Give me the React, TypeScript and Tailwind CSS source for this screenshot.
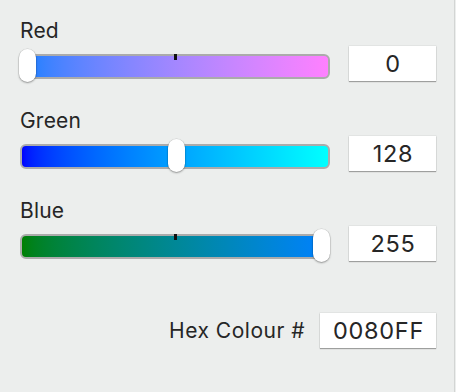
import React from "react";

type RowProps = {
  label: string;
  value: string;
  trackClass: string;
  thumbClass: string;
  showTick: boolean;
  className?: string;
};

function SliderRow({ label, value, trackClass, thumbClass, showTick, className }: RowProps) {
  return (
    <div className={"flex flex-col " + (className ?? "")}>
      <div className="h-[24px] text-[21px] leading-[24px] tracking-[0.2px] text-[#262626]">{label}</div>
      <div className="mt-[3px] flex items-start">
        <div className={"relative mt-[8px] h-[25px] w-[310px] rounded-[6px] border-2 border-[#ababab] " + trackClass}>
          {showTick && <div className="absolute left-[152px] top-[-2px] h-[6px] w-[3px] bg-[#111]" />}
          <div
            className={
              "absolute top-[-7px] h-[33px] w-[17px] rounded-full bg-white shadow-[0_1px_2px_rgba(0,0,0,0.35),0_0_0_0.5px_rgba(0,0,0,0.12)] " +
              thumbClass
            }
          />
        </div>
        <div className="ml-[19px] flex h-[35px] w-[87px] items-center justify-center bg-white pl-[1px] text-[23.5px] tracking-[0.7px] text-[#262626] shadow-[0_1px_1px_rgba(0,0,0,0.3),0_0_0_0.5px_rgba(0,0,0,0.08)]">
          {value}
        </div>
      </div>
    </div>
  );
}

export default function App() {
  return (
    <div className="flex h-[392px] w-[456px] bg-[#eceeed] font-['Inter',sans-serif]">
      <div className="flex h-full w-[455px] flex-col border-r border-[#d3d5d4] pl-[20px] pr-[18px] pt-[19px]">
        <SliderRow
          label="Red"
          value="0"
          trackClass="bg-linear-to-r from-[#0080ff] to-[#ff80ff]"
          thumbClass="left-[-3px]"
          showTick={true}
        />
        <SliderRow
          label="Green"
          value="128"
          trackClass="bg-linear-to-r from-[#0000ff] to-[#00ffff]"
          thumbClass="left-[146px]"
          showTick={false}
          className="mt-[28px]"
        />
        <SliderRow
          label="Blue"
          value="255"
          trackClass="bg-linear-to-r from-[#008000] to-[#0080ff]"
          thumbClass="right-[-2px]"
          showTick={true}
          className="mt-[28px]"
        />
        <div className="mt-[52px] flex items-center justify-end">
          <span className="text-[21px] tracking-[0.5px] text-[#262626]">Hex Colour #</span>
          <div className="ml-[15px] flex h-[35px] w-[116px] items-center justify-center bg-white pl-[1px] text-[23.5px] tracking-[0.7px] text-[#262626] shadow-[0_1px_1px_rgba(0,0,0,0.3),0_0_0_0.5px_rgba(0,0,0,0.08)]">
            0080FF
          </div>
        </div>
      </div>
    </div>
  );
}
